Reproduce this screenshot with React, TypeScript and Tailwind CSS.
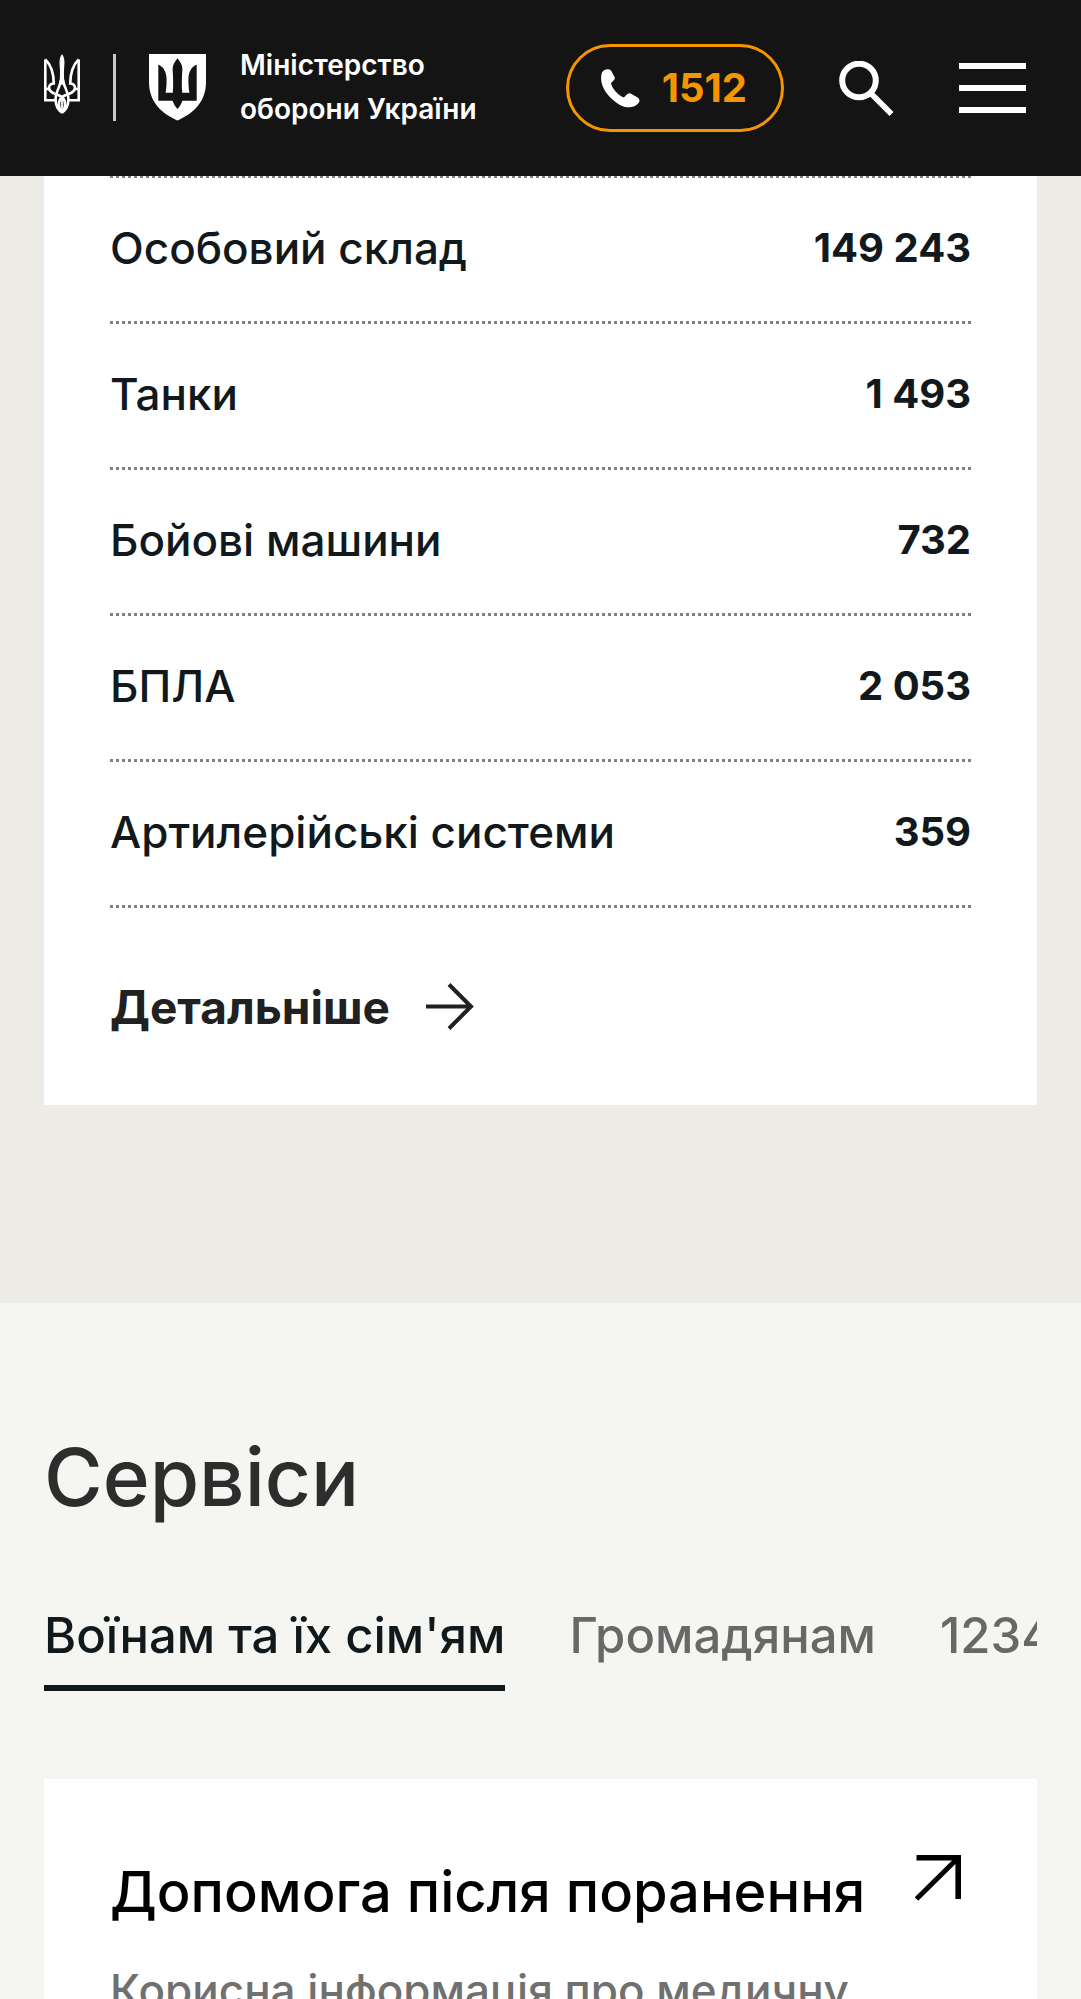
import React from "react";

const losses = [
  { label: "Особовий склад", value: "149 243" },
  { label: "Танки", value: "1 493" },
  { label: "Бойові машини", value: "732" },
  { label: "БПЛА", value: "2 053" },
  { label: "Артилерійські системи", value: "359" },
];

const tabs = ["Воїнам та їх сім'ям", "Громадянам", "1234"];

function Trident() {
  const half = (
    <g fill="none" stroke="currentColor" strokeWidth="2.6">
      <path d="M1.3 5.5V46.2H12" />
      <path d="M1.3 5.5C7.2 11 9.6 18 9.8 29.5C5.6 29.6 3.8 33 6 36.6C9 40.6 14 40 18 43C22.4 47 21.8 54.5 18 58.5" />
      <path d="M1.2 35H6" />
      <path d="M17 26C16.4 32 11.6 38 11.6 45C11.6 51 14 56 18 58.6" />
    </g>
  );
  return (
    <svg viewBox="0 0 36 60" className="h-[60px] w-9 shrink-0" aria-hidden="true">
      {half}
      <g transform="matrix(-1 0 0 1 36 0)">{half}</g>
      <path d="M18 43V59" stroke="currentColor" strokeWidth="1.8" />
      <path
        fill="currentColor"
        d="M18 0C20.4 3 20.8 7 20.3 12C19.8 18 19.8 23 20.6 29L18 31L15.4 29C16.2 23 16.2 18 15.7 12C15.2 7 15.6 3 18 0Z"
      />
    </svg>
  );
}

function Shield() {
  return (
    <svg viewBox="0 0 57 67" className="h-[67px] w-[57px] shrink-0" aria-hidden="true">
      <path
        fill="currentColor"
        fillRule="evenodd"
        d="M0 0H57V28C57 49 43 60 28.5 66.5C14 60 0 49 0 28ZM9.3 10.5V46.8H23.6C24.6 50 26.4 53 28.5 55C30.6 53 32.4 50 33.4 46.8H47.7V10.5C42.6 12.5 39.6 18 39.4 25C39.4 30 39.6 34 40.4 38.8H33.2C32.6 30 32.8 24 33.4 15C33.4 10.5 31 7.5 28.5 4.2C26 7.5 23.6 10.5 23.6 15C24.2 24 24.4 30 23.8 38.8H16.6C17.4 34 17.6 30 17.6 25C17.4 18 14.4 12.5 9.3 10.5Z"
      />
    </svg>
  );
}

function Phone() {
  return (
    <svg viewBox="0 0 39 39" className="h-[39px] w-[39px] shrink-0 text-white" aria-hidden="true">
      <path
        fill="currentColor"
        d="M1 3.4C3 .4 7.6 -.6 10 1.4L13.8 8.4C14.4 10.6 12 12 10 14C10.4 18.6 17 26.4 22.8 28.6C25 26.8 26.4 23.6 29.6 24.5L36.6 28.4C39.4 30.2 38.8 33 36.6 35C32 39.4 25 39.2 18 35.4C9.6 30 2.6 22.4.6 13.8C-.2 9.8 0 6 1 3.4Z"
      />
    </svg>
  );
}

export default function App() {
  return (
    <div className="h-screen overflow-hidden bg-[#f5f5f1] font-['Inter',sans-serif] font-medium">
      <header className="fixed inset-x-0 top-0 z-10 flex h-44 items-center justify-between bg-[#141414] pr-[55px] pl-11 text-white">
        <a href="#home" className="flex items-center pb-0.5">
          <span className="flex h-[67px] items-start">
            <Trident />
            <span className="mr-[33px] ml-[33px] h-full w-[3px] bg-[#c9c9d4]" />
            <Shield />
          </span>
          <span className="ml-[34px] text-[28px] leading-[44px] font-semibold">
            Міністерство
            <br />
            оборони України
          </span>
        </a>
        <div className="flex items-center">
          <a
            href="tel:1512"
            className="flex h-[88px] items-center gap-[22px] rounded-full border-3 border-[#f59500] pr-[34px] pl-8 text-[40px] font-bold text-[#f59500]"
          >
            <Phone />
            1512
          </a>
          <button type="button" aria-label="Пошук" className="ml-[54px]">
            <svg viewBox="0 0 55 55" className="h-[55px] w-[55px]" fill="none" stroke="currentColor">
              <circle cx="21" cy="19.5" r="16.8" strokeWidth="6" />
              <path d="M32.5 32L53.5 53" strokeWidth="5.6" />
            </svg>
          </button>
          <button type="button" aria-label="Меню" className="ml-[66px] flex w-[67px] flex-col gap-4">
            <span className="h-1.5 bg-white" />
            <span className="h-1.5 bg-white" />
            <span className="h-1.5 bg-white" />
          </button>
        </div>
      </header>

      <section className="bg-[#edece6] px-11 pt-[175px] pb-[198px]">
        <div className="bg-white px-[66px] pb-[70px] text-[#11191d]">
          <dl className="border-t-3 border-dotted border-[#808080]">
            {losses.map((row) => (
              <div
                key={row.label}
                className="flex h-[146px] items-center justify-between border-b-3 border-dotted border-[#808080] pb-[3px]"
              >
                <dt className="text-[44px] leading-[60px]">{row.label}</dt>
                <dd className="text-[40px] leading-[60px] font-bold">{row.value}</dd>
              </div>
            ))}
          </dl>
          <a href="#details" className="mt-[71px] flex h-14 items-center gap-9 text-[46px] font-bold text-[#212121]">
            Детальніше
            <svg viewBox="0 0 48 48" className="h-12 w-12" fill="none" stroke="currentColor" strokeWidth="4">
              <path d="M0 23.5H46M23 1.5L45 23.5L23 45.5" />
            </svg>
          </a>
        </div>
      </section>

      <section className="px-11 pt-[130px]">
        <h2 className="text-[80px] leading-[88px] text-[#2d2d2d]">Сервіси</h2>
        <div role="tablist" className="mt-[83px] flex gap-16 overflow-hidden text-[49px] leading-[64px] whitespace-nowrap">
          {tabs.map((tab, i) => (
            <button
              key={tab}
              type="button"
              role="tab"
              aria-selected={i === 0}
              className="shrink-0 border-b-6 border-transparent pb-[17px] text-[#686868] aria-selected:border-[#11191d] aria-selected:text-[#11191d]"
            >
              {tab}
            </button>
          ))}
        </div>
        <a href="#injury-help" className="mt-22 block bg-white px-[66px] pt-[76px] pb-20">
          <div className="flex items-start justify-between pr-2.5">
            <h3 className="text-[56px] leading-[74px] text-black">Допомога після поранення</h3>
            <svg viewBox="0 0 46 46" className="h-[46px] w-[46px] shrink-0 text-black" fill="none" stroke="currentColor">
              <path d="M1.5 2.8H43.2V44" strokeWidth="5.6" />
              <path d="M1.5 44L43 3" strokeWidth="5" />
            </svg>
          </div>
          <p className="mt-[31px] text-[44px] leading-[60px] text-[#707070]">Корисна інформація про медичну</p>
        </a>
      </section>
    </div>
  );
}
